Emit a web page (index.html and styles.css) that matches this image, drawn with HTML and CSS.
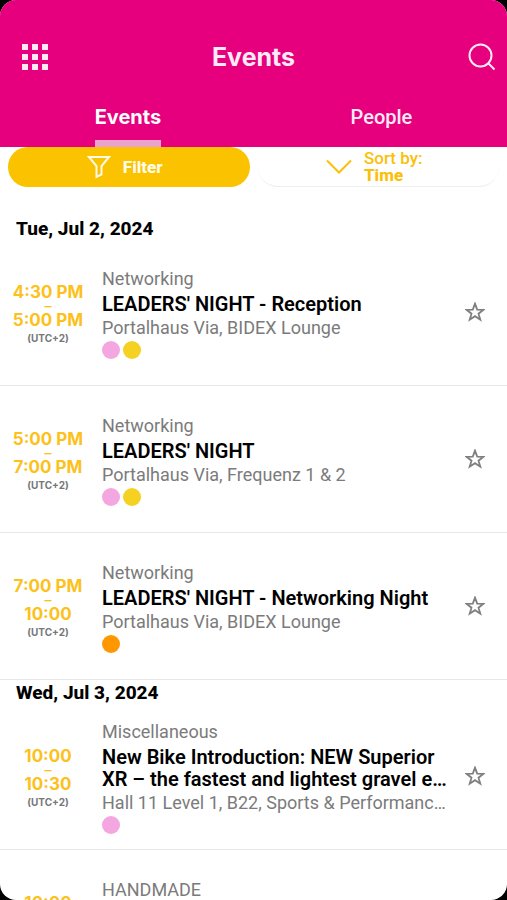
FILE: index.html
```
<!DOCTYPE html>
<html lang="en">
<head>
    <meta charset="UTF-8">
    <meta name="viewport" content="width=device-width, initial-scale=1">
    <title>Events</title>
    <link rel="stylesheet" href="styles.css">
</head>
<body>
    <svg width="0" height="0" class="sprite" aria-hidden="true">
        <symbol id="star" viewBox="0 0 20 20">
            <path d="M10 1.600l2.200 6 6.300.2-5 3.900 1.800 6-5.300-3.500-5.300 3.500 1.800-6-5-3.900 6.300-.2z" fill="none" stroke="currentColor" stroke-width="1.800"/>
        </symbol>
    </svg>
    <div class="app">
        <header class="header">
            <div class="bar">
                <button class="icon-btn" aria-label="Menu">
                    <svg width="28" height="28" viewBox="0 0 28 28" fill="currentColor">
                        <path d="M1 1h6v6H1zM11 1h6v6h-6zM21 1h6v6h-6zM1 11h6v6H1zM11 11h6v6h-6zM21 11h6v6h-6zM1 21h6v6H1zM11 21h6v6h-6zM21 21h6v6h-6z"/>
                    </svg>
                </button>
                <h1>Events</h1>
                <button class="icon-btn" aria-label="Search">
                    <svg width="28" height="28" viewBox="0 0 28 28" fill="none" stroke="currentColor" stroke-width="2">
                        <circle cx="12.500" cy="12.500" r="11"/>
                        <path d="M20 20l6.500 6.500"/>
                    </svg>
                </button>
            </div>
            <nav class="tabs">
                <a href="#events" class="tab active">Events</a>
                <a href="#people" class="tab">People</a>
            </nav>
        </header>
        <div class="tools">
            <button class="pill filter">
                <svg width="24" height="24" viewBox="0 0 24 24" fill="none" stroke="currentColor" stroke-width="2">
                    <path d="M2 2h20l-7.500 9v8.500L9.500 22V11z"/>
                </svg>
                Filter
            </button>
            <button class="pill sort">
                <svg width="26" height="16" viewBox="0 0 26 16" fill="none" stroke="currentColor" stroke-width="2">
                    <path d="M1 1.500l12 12 12-12"/>
                </svg>
                <span>Sort by:<br><b>Time</b></span>
            </button>
        </div>
        <main>
            <h2 class="first">Tue, Jul 2, 2024</h2>
            <article class="event">
                <div class="time">4:30 PM<i>–</i>5:00 PM<small>(UTC+2)</small></div>
                <div class="info">
                    <p>Networking</p>
                    <h3>LEADERS' NIGHT - Reception</h3>
                    <p>Portalhaus Via, BIDEX Lounge</p>
                    <div class="dots"><span class="pink"></span><span class="yellow"></span></div>
                </div>
                <button class="star" aria-label="Add to favourites"><svg width="20" height="20"><use href="#star"/></svg></button>
            </article>
            <article class="event">
                <div class="time">5:00 PM<i>–</i>7:00 PM<small>(UTC+2)</small></div>
                <div class="info">
                    <p>Networking</p>
                    <h3>LEADERS' NIGHT</h3>
                    <p>Portalhaus Via, Frequenz 1 &amp; 2</p>
                    <div class="dots"><span class="pink"></span><span class="yellow"></span></div>
                </div>
                <button class="star" aria-label="Add to favourites"><svg width="20" height="20"><use href="#star"/></svg></button>
            </article>
            <article class="event">
                <div class="time">7:00 PM<i>–</i>10:00<small>(UTC+2)</small></div>
                <div class="info">
                    <p>Networking</p>
                    <h3>LEADERS' NIGHT - Networking Night</h3>
                    <p>Portalhaus Via, BIDEX Lounge</p>
                    <div class="dots"><span class="orange"></span></div>
                </div>
                <button class="star" aria-label="Add to favourites"><svg width="20" height="20"><use href="#star"/></svg></button>
            </article>
            <h2>Wed, Jul 3, 2024</h2>
            <article class="event">
                <div class="time">10:00<i>–</i>10:30<small>(UTC+2)</small></div>
                <div class="info">
                    <p>Miscellaneous</p>
                    <h3>New Bike Introduction: NEW Superior XR – the fastest and lightest gravel e-bike</h3>
                    <p>Hall 11 Level 1, B22, Sports &amp; Performance Stage</p>
                    <div class="dots"><span class="pink"></span></div>
                </div>
                <button class="star" aria-label="Add to favourites"><svg width="20" height="20"><use href="#star"/></svg></button>
            </article>
            <article class="event">
                <div class="time">10:00<i>–</i>10:30<small>(UTC+2)</small></div>
                <div class="info">
                    <p>HANDMADE</p>
                    <h3>HANDMADE</h3>
                    <p>Hall 11 Level 1</p>
                    <div class="dots"><span class="pink"></span></div>
                </div>
                <button class="star" aria-label="Add to favourites"><svg width="20" height="20"><use href="#star"/></svg></button>
            </article>
        </main>
    </div>
</body>
</html>
```
FILE: styles.css
```
* {
    box-sizing: border-box;
}
body {
    margin: 0;
    background: #000;
    font-family: Roboto, sans-serif;
    color: #000;
}
h1, h2, h3, p {
    margin: 0;
}
button {
    border: 0;
    padding: 0;
    background: none;
    color: inherit;
    font-family: inherit;
}
svg {
    display: block;
}
.sprite {
    position: absolute;
}
.app {
    height: 100vh;
    overflow: hidden;
    border-radius: 16px;
    background: #fff;
}
.header {
    background: #e6007e;
    color: #ffeaf6;
}
.bar {
    display: grid;
    grid-template-columns: 1fr auto 1fr;
    align-items: center;
    height: 100px;
    padding: 14px 11px 0;
}
.bar .icon-btn:first-child {
    justify-self: start;
    margin-left: 10px;
}
.bar .icon-btn:last-child {
    justify-self: end;
}
h1 {
    font-family: Inter, sans-serif;
    font-size: 25px;
    font-weight: 700;
    line-height: 28px;
}
.tabs {
    display: flex;
    height: 47px;
}
.tab {
    height: 47px;
    margin: 0 auto;
    border-bottom: 7px solid transparent;
    color: inherit;
    font-size: 20px;
    font-weight: 500;
    line-height: 34px;
    text-decoration: none;
}
.tab.active {
    border-color: #e9a3cd;
    color: #fff;
    font-family: Inter, sans-serif;
    font-weight: 700;
}
.tools {
    display: grid;
    grid-template-columns: 1fr 1fr;
    gap: 8px;
    padding: 0 8px;
}
.pill {
    display: flex;
    align-items: center;
    justify-content: center;
    gap: 12px;
    height: 40px;
    padding-right: 8px;
    border-radius: 20px;
    font-size: 17px;
    line-height: 17px;
    text-align: left;
}
.filter {
    background: #fbc200;
    color: #fffbe8;
    font-weight: 800;
}
.sort {
    border-bottom: 1px solid #eee;
    color: #fbbf09;
    font-weight: 500;
}
.sort b {
    font-weight: 800;
}
h2 {
    padding: 3px 16px 0;
    font-size: 19px;
    font-weight: 800;
    line-height: 20px;
}
h2.first {
    margin-top: 29px;
}
.event {
    display: flex;
    align-items: center;
    min-height: 147px;
    border-bottom: 1px solid #e8e8e8;
}
.time {
    flex: none;
    width: 96px;
    padding-top: 6px;
    color: #fcc11a;
    font-family: Inter, sans-serif;
    font-size: 17px;
    font-weight: 700;
    line-height: 18px;
    text-align: center;
}
.time i {
    display: block;
    font-size: 14px;
    font-style: normal;
    font-weight: 500;
    line-height: 10px;
}
.time small {
    display: block;
    color: #777;
    font-size: 10px;
    font-weight: 700;
    line-height: 18px;
}
.info {
    flex: 1;
    min-width: 0;
    padding: 2px 0 0 6px;
}
.info p {
    overflow: hidden;
    color: #7b7b7b;
    font-size: 18px;
    line-height: 24px;
    text-overflow: ellipsis;
    white-space: nowrap;
}
.info h3 {
    display: -webkit-box;
    overflow: hidden;
    margin: 2px 0 1px;
    font-size: 20px;
    font-weight: 600;
    line-height: 22px;
    -webkit-box-orient: vertical;
    -webkit-line-clamp: 2;
}
.dots {
    display: flex;
    gap: 3px;
    margin-top: 1px;
}
.dots span {
    width: 18px;
    height: 18px;
    border-radius: 50%;
}
.pink {
    background: #f3a6e0;
}
.yellow {
    background: #f5d121;
}
.orange {
    background: #ff9800;
}
.star {
    flex: none;
    margin: 0 22px 0 12px;
    color: #808080;
}
```
